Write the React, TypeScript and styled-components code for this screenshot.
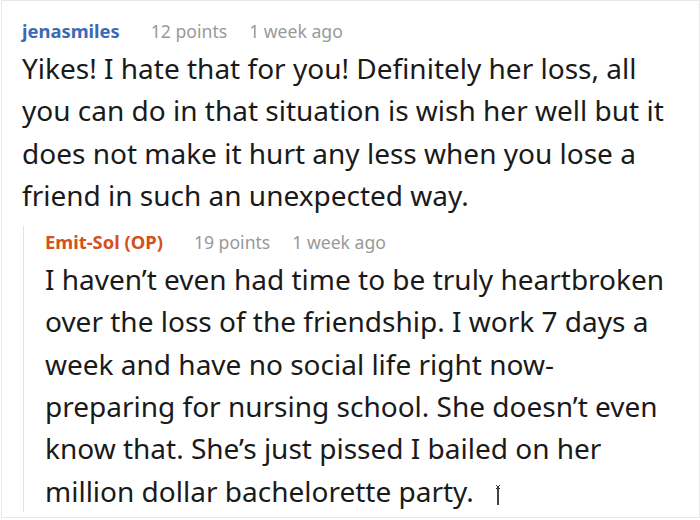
import React from "react";
import styled, { createGlobalStyle } from "styled-components";

const Global = createGlobalStyle`
  html, body { margin: 0; padding: 0; background: #fff; }
  body { font-family: "Noto Sans", "Open Sans", sans-serif; }
`;

const Frame = styled.div`
  box-sizing: border-box;
  width: 699px;
  height: 518px;
  margin-left: 1px;
  border: 1px solid #e8e8e8;
  overflow: hidden;
  padding: 14px 24px 0 20px;
`;

const Header = styled.div`
  display: flex;
  align-items: baseline;
  gap: 22px;
  font-size: 17.6px;
  line-height: 32px;
`;

const User = styled.span<{ $op?: boolean }>`
  font-weight: 700;
  font-size: 18.4px;
  margin-right: 9px;
  color: ${(p) => (p.$op ? "#d4501c" : "#3a6ab4")};
`;

const Meta = styled.span`
  color: #999;
`;

const Body = styled.p`
  margin: 0;
  font-size: 28px;
  line-height: 42.3px;
  color: #1a1a1a;
`;

const Reply = styled.div`
  margin-top: 10px;
  border-left: 1px solid #e4e4e4;
  margin-left: 1px;
  padding-left: 21px;
`;

const Cursor = styled.svg`
  display: inline-block;
  margin-left: 20px;
  vertical-align: -4px;
`;

export default function App() {
  return (
    <>
      <Global />
      <Frame>
        <Header>
          <User>jenasmiles</User>
          <Meta>12 points</Meta>
          <Meta>1 week ago</Meta>
        </Header>
        <Body>
          Yikes! I hate that for you! Definitely her loss, all you can do in that situation is wish her well but it does not make it hurt any less when you lose a friend in such an unexpected way.
        </Body>
        <Reply>
          <Header>
            <User $op>Emit-Sol (OP)</User>
            <Meta>19 points</Meta>
            <Meta>1 week ago</Meta>
          </Header>
          <Body>
            I haven’t even had time to be truly heartbroken over the loss of the friendship. I work 7 days a week and have no social life right now- preparing for nursing school. She doesn’t even know that. She’s just pissed I bailed on her million dollar bachelorette party.
            <Cursor width="8" height="22" viewBox="0 0 8 22">
              <path d="M2 1 L6 5 M6 1 L2 5" stroke="#333" strokeWidth="1" />
              <path d="M4 4 V21" stroke="#444" strokeWidth="2" />
            </Cursor>
          </Body>
        </Reply>
      </Frame>
    </>
  );
}
